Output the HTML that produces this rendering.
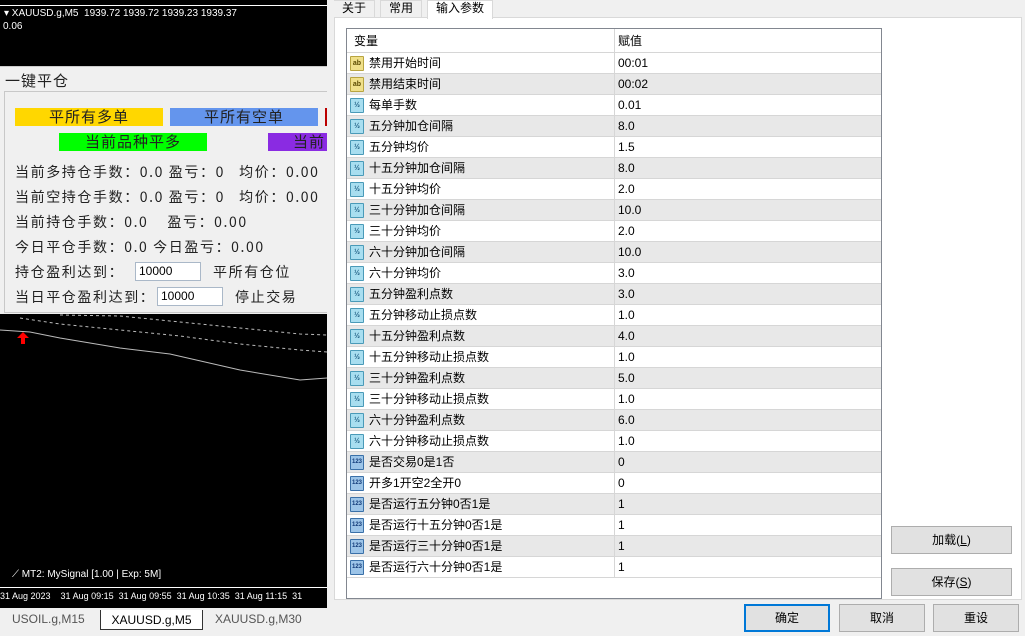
<!DOCTYPE html>
<html><head><meta charset="utf-8"><style>
*{margin:0;padding:0;box-sizing:border-box}
body{width:1025px;height:636px;position:relative;overflow:hidden;background:#f0f0f0;font-family:"Liberation Sans","Noto Sans CJK SC",sans-serif;font-size:12px;color:#000}
.abs{position:absolute}
.chart{left:0;top:0;width:327px;height:608px;background:#000}
.panel{left:0;top:66px;width:327px;height:248px;background:#f0f0f0;border-top:1px solid #ccc}
.inner{left:4px;top:24px;width:330px;height:222px;border:1px solid #c8c8c8}
.btn{position:absolute;height:18px;text-align:center;font-size:15px;line-height:18px;color:#222;font-family:"WenQuanYi Zen Hei","Noto Sans CJK SC",sans-serif;letter-spacing:1px}
.t{position:absolute;font-size:14px;color:#222;font-family:"WenQuanYi Zen Hei","Noto Sans CJK SC",sans-serif;white-space:nowrap;letter-spacing:1.6px}
.inp{position:absolute;background:#fff;border:1px solid #aab8c8;height:19px;font-size:12px;line-height:17px;padding-left:3px}
.tabs{top:609px;left:0;width:327px;height:27px;background:#f0f0f0}
.dlg{left:327px;top:0;width:698px;height:636px;background:#f0f0f0}
.tab{position:absolute;top:0;height:18px;font-size:12px;line-height:14px;padding:0 8px;border:1px solid #d9d9d9;border-bottom:none;background:#f0f0f0}
.page{left:334px;top:17px;width:688px;height:583px;background:#fff;border:1px solid #d9d9d9}
.tbl{left:346px;top:28px;width:536px;height:571px;border:1px solid #828790;background:#fff}
.row{position:absolute;left:0;width:534px;height:21px;border-bottom:1px solid #d6d6d6;font-size:12px;line-height:20px}
.row.g{background:#e8e8e8}
.row .n{position:absolute;left:22px}
.row .v{position:absolute;left:271px}
.row .d{position:absolute;left:267px;top:0;width:1px;height:21px;background:#d6d6d6}
.ic{position:absolute;left:3px;top:3px;width:14px;height:15px;border-radius:1px;font-size:7px;line-height:13px;text-align:center;font-weight:bold}
.ab{background:#f0e08a;border:1px solid #b8a440;color:#5a4a00}
.hf{background:#a8def0;border:1px solid #4a9ab8;color:#1a5a80}
.nn{background:#9cc4e8;border:1px solid #3a70a8;color:#123a78;font-size:6px}
.b{position:absolute;background:#e1e1e1;border:1px solid #adadad;text-align:center;font-size:12px;line-height:26px}
</style></head><body>
<div class="abs chart">
<div class="abs" style="left:0;top:5px;width:327px;height:1px;background:#fff"></div>
<div class="abs" style="left:4px;top:8px;color:#fff;font-size:10px;white-space:nowrap">▾ XAUUSD.g,M5&nbsp; 1939.72 1939.72 1939.23 1939.37</div>
<div class="abs" style="left:3px;top:21px;color:#fff;font-size:10px">0.06</div>
<svg class="abs" style="left:0;top:310px" width="327" height="100"><polyline points="0,20 30,22 60,28 120,38 170,44 240,60 300,70 327,68" fill="none" stroke="#bbb" stroke-width="1"/><polyline points="20,8 60,14 120,20 180,26 240,34 300,40 327,42" fill="none" stroke="#bbb" stroke-dasharray="3,3"/><polyline points="60,5 120,6 180,12 240,18 300,24 327,25" fill="none" stroke="#bbb" stroke-dasharray="3,3"/><path d="M23 22 L17 28 L21 28 L21 34 L25 34 L25 28 L29 28 Z" fill="#f00"/></svg>
<div class="abs" style="left:12px;top:569px;color:#fff;font-size:10px;white-space:nowrap">⟋ MT2: MySignal [1.00 | Exp: 5M]</div>
<div class="abs" style="left:0;top:587px;width:327px;height:1px;background:#fff"></div>
<div class="abs" style="left:0;top:591px;color:#fff;font-size:9px;white-space:nowrap;word-spacing:0">31 Aug 2023&nbsp;&nbsp;&nbsp; 31 Aug 09:15&nbsp;&nbsp;31 Aug 09:55&nbsp;&nbsp;31 Aug 10:35&nbsp;&nbsp;31 Aug 11:15&nbsp;&nbsp;31</div>
</div>
<div class="abs panel">
<div class="t" style="left:5px;top:3px;font-size:15px;letter-spacing:1px">一键平仓</div>
<div class="abs inner"></div>
<div class="btn" style="left:15px;top:41px;width:148px;background:#ffd700">平所有多单</div>
<div class="btn" style="left:170px;top:41px;width:148px;background:#6495ed">平所有空单</div>
<div class="btn" style="left:325px;top:41px;width:4px;background:#b00"></div>
<div class="btn" style="left:59px;top:66px;width:148px;background:#00ff00">当前品种平多</div>
<div class="btn" style="left:268px;top:66px;width:60px;background:#8a2be2;text-align:left;padding-left:25px;overflow:hidden">当前</div>
<div class="t" style="left:15px;top:95px">当前多持仓手数：0.0 盈亏：0&nbsp;&nbsp; 均价：0.00</div>
<div class="t" style="left:15px;top:120px">当前空持仓手数：0.0 盈亏：0&nbsp;&nbsp; 均价：0.00</div>
<div class="t" style="left:15px;top:145px">当前持仓手数：0.0&nbsp;&nbsp;&nbsp; 盈亏：0.00</div>
<div class="t" style="left:15px;top:170px">今日平仓手数：0.0 今日盈亏：0.00</div>
<div class="t" style="left:15px;top:195px">持仓盈利达到：</div>
<div class="inp" style="left:135px;top:195px;width:66px">10000</div>
<div class="t" style="left:213px;top:195px">平所有仓位</div>
<div class="t" style="left:15px;top:220px">当日平仓盈利达到：</div>
<div class="inp" style="left:157px;top:220px;width:66px">10000</div>
<div class="t" style="left:235px;top:220px">停止交易</div>
</div>
<div class="abs tabs">
<div class="abs" style="left:12px;top:3px;color:#555;font-size:12px">USOIL.g,M15</div>
<div class="abs" style="left:100px;top:1px;width:103px;height:20px;background:#fff;border:1px solid #333;border-top:none;text-align:center;font-size:12px;line-height:20px">XAUUSD.g,M5</div>
<div class="abs" style="left:215px;top:3px;color:#555;font-size:12px">XAUUSD.g,M30</div>
</div>
<div class="abs dlg">
<div class="tab" style="left:7px;border-left:none">关于</div>
<div class="tab" style="left:53px">常用</div>
<div class="tab" style="left:100px;background:#fff;height:19px;z-index:2">输入参数</div>
</div>
<div class="abs page"></div>
<div class="abs tbl">
<div class="row" style="top:0;height:24px;line-height:24px"><span class="n" style="left:7px">变量</span><span class="d" style="height:24px"></span><span class="v">赋值</span></div>
<div id="rows"></div>
</div>
<div class="b" style="left:891px;top:526px;width:121px;height:28px">加载(<u>L</u>)</div>
<div class="b" style="left:891px;top:568px;width:121px;height:28px">保存(<u>S</u>)</div>
<div class="b" style="left:744px;top:604px;width:86px;height:28px;border:2px solid #0078d7;line-height:24px">确定</div>
<div class="b" style="left:839px;top:604px;width:86px;height:28px">取消</div>
<div class="b" style="left:933px;top:604px;width:86px;height:28px">重设</div>
<script>
var d=[["ab","禁用开始时间","00:01"],["ab","禁用结束时间","00:02"],["hf","每单手数","0.01"],["hf","五分钟加仓间隔","8.0"],["hf","五分钟均价","1.5"],["hf","十五分钟加仓间隔","8.0"],["hf","十五分钟均价","2.0"],["hf","三十分钟加仓间隔","10.0"],["hf","三十分钟均价","2.0"],["hf","六十分钟加仓间隔","10.0"],["hf","六十分钟均价","3.0"],["hf","五分钟盈利点数","3.0"],["hf","五分钟移动止损点数","1.0"],["hf","十五分钟盈利点数","4.0"],["hf","十五分钟移动止损点数","1.0"],["hf","三十分钟盈利点数","5.0"],["hf","三十分钟移动止损点数","1.0"],["hf","六十分钟盈利点数","6.0"],["hf","六十分钟移动止损点数","1.0"],["nn","是否交易0是1否","0"],["nn","开多1开空2全开0","0"],["nn","是否运行五分钟0否1是","1"],["nn","是否运行十五分钟0否1是","1"],["nn","是否运行三十分钟0否1是","1"],["nn","是否运行六十分钟0否1是","1"]];
var h="",t={ab:"ab",hf:"½",nn:"123"};
d.forEach(function(r,i){h+='<div class="row'+(i%2?' g':'')+'" style="top:'+(24+i*21)+'px"><span class="ic '+r[0]+'">'+t[r[0]]+'</span><span class="n">'+r[1]+'</span><span class="d"></span><span class="v">'+r[2]+'</span></div>';});
document.getElementById("rows").outerHTML=h;
</script>
</body></html>
